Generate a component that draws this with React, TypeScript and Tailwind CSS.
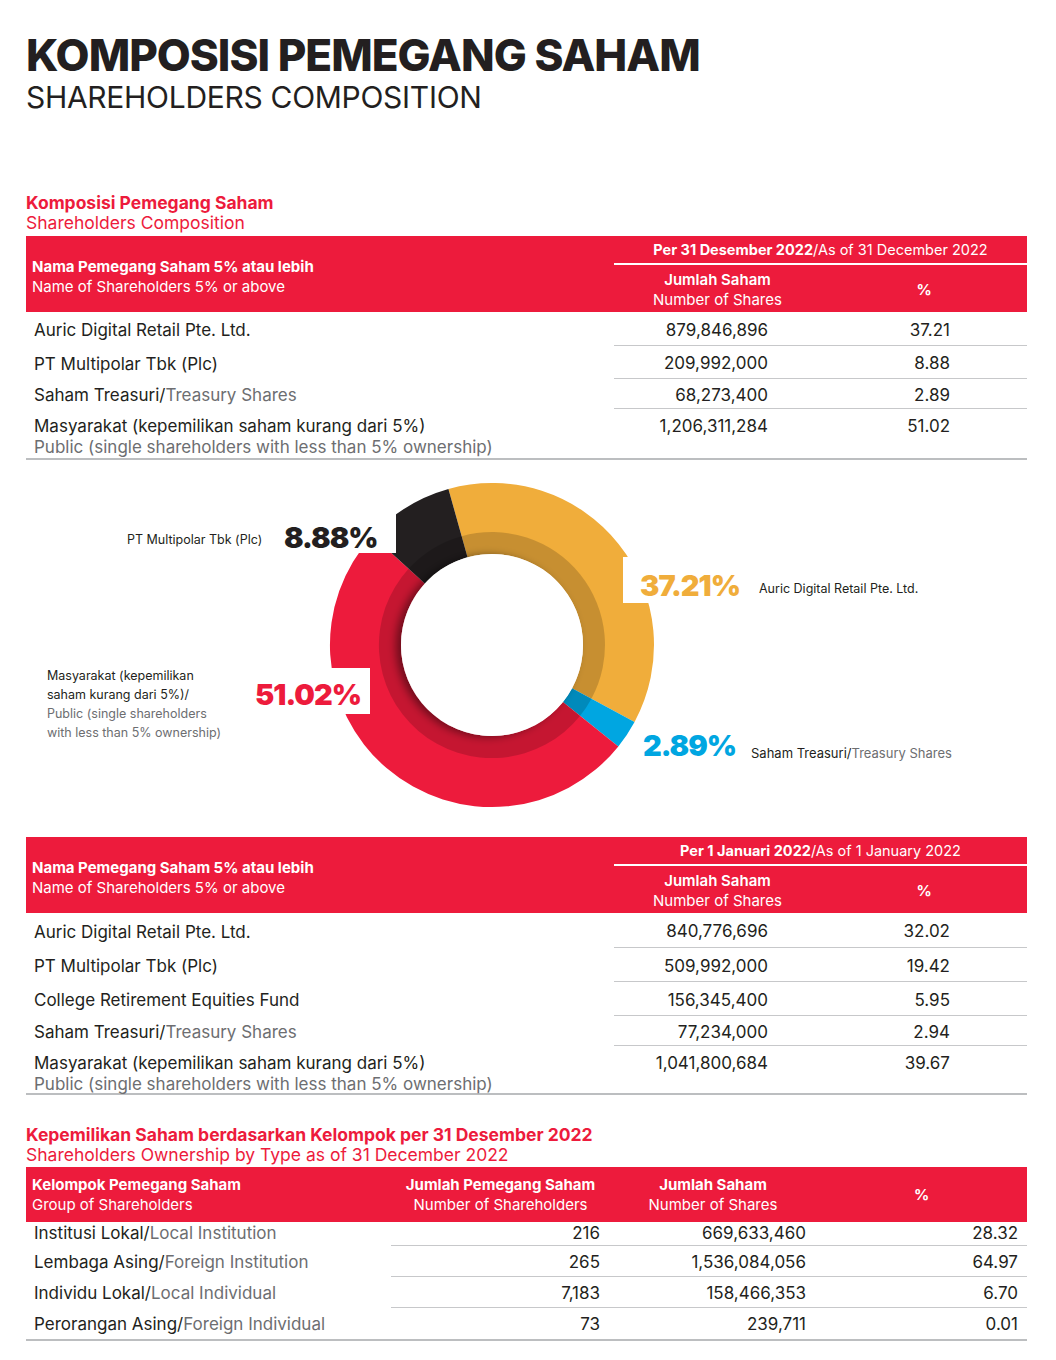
import React from 'react';

const RED = '#ED1B3C';

type Row = { id: string; en?: string; sub?: string; shares: string; pct: string };

const rows2022: Row[] = [
  { id: 'Auric Digital Retail Pte. Ltd.', shares: '879,846,896', pct: '37.21' },
  { id: 'PT Multipolar Tbk (Plc)', shares: '209,992,000', pct: '8.88' },
  { id: 'Saham Treasuri/', en: 'Treasury Shares', shares: '68,273,400', pct: '2.89' },
  {
    id: 'Masyarakat (kepemilikan saham kurang dari 5%)',
    sub: 'Public (single shareholders with less than 5% ownership)',
    shares: '1,206,311,284',
    pct: '51.02',
  },
];

const rows2021: Row[] = [
  { id: 'Auric Digital Retail Pte. Ltd.', shares: '840,776,696', pct: '32.02' },
  { id: 'PT Multipolar Tbk (Plc)', shares: '509,992,000', pct: '19.42' },
  { id: 'College Retirement Equities Fund', shares: '156,345,400', pct: '5.95' },
  { id: 'Saham Treasuri/', en: 'Treasury Shares', shares: '77,234,000', pct: '2.94' },
  {
    id: 'Masyarakat (kepemilikan saham kurang dari 5%)',
    sub: 'Public (single shareholders with less than 5% ownership)',
    shares: '1,041,800,684',
    pct: '39.67',
  },
];

const groups = [
  { id: 'Institusi Lokal/', en: 'Local Institution', holders: '216', shares: '669,633,460', pct: '28.32' },
  { id: 'Lembaga Asing/', en: 'Foreign Institution', holders: '265', shares: '1,536,084,056', pct: '64.97' },
  { id: 'Individu Lokal/', en: 'Local Individual', holders: '7,183', shares: '158,466,353', pct: '6.70' },
  { id: 'Perorangan Asing/', en: 'Foreign Individual', holders: '73', shares: '239,711', pct: '0.01' },
];

const ShareTable: React.FC<{ period: string; periodEn: string; rows: Row[]; heights: number[] }> = ({
  period,
  periodEn,
  rows,
  heights,
}) => (
  <div className="w-[1001px]">
    {/* Header */}
    <div className="flex h-[76px] bg-[#ED1B3C] text-white">
      <div className="w-[588px] flex flex-col justify-center pl-[6px] pt-[6px] leading-[20px] text-[15px]">
        <span className="font-bold">Nama Pemegang Saham 5% atau lebih</span>
        <span>Name of Shareholders 5% or above</span>
      </div>
      <div className="flex-1 flex flex-col">
        <div className="h-[29px] flex items-end justify-center pb-[2px] border-b-2 border-white text-[14.5px]">
          <span className="font-bold">{period}</span>
          <span>/{periodEn}</span>
        </div>
        <div className="flex-1 flex items-center">
          <div className="w-[207px] flex flex-col items-center leading-[20px] text-[15px] pt-[3px]">
            <span className="font-semibold">Jumlah Saham</span>
            <span>Number of Shares</span>
          </div>
          <div className="flex-1 text-center text-[15px] font-bold pt-[3px]">%</div>
        </div>
      </div>
    </div>
    {/* Rows */}
    {rows.map((r, i) => {
      const last = i === rows.length - 1;
      return (
        <div
          key={r.id + i}
          className={`flex text-[17px] text-[#231F20] ${last ? 'border-b-2 border-[#BCBEC0]' : ''}`}
          style={{ height: heights[i] }}
        >
          <div className={`w-[588px] pl-[8px] flex flex-col ${last ? 'pt-[7px] leading-[21px]' : 'justify-center pt-[4px]'}`}>
            <span>
              {r.id}
              {r.en && <span className="text-[#6D6E71]">{r.en}</span>}
            </span>
            {r.sub && <span className="text-[#6D6E71]">{r.sub}</span>}
          </div>
          <div
            className={`flex-1 flex ${last ? 'items-start pt-[7px] leading-[21px]' : 'items-center pt-[4px] border-b-[1.5px] border-[#C7C8CA]'}`}
          >
            <div className="w-[207px] text-right pr-[53px]">{r.shares}</div>
            <div className="flex-1 text-right pr-[77px]">{r.pct}</div>
          </div>
        </div>
      );
    })}
  </div>
);

const CX = 492;
const CY = 185;

function pt(r: number, deg: number) {
  const a = (deg * Math.PI) / 180;
  return `${(CX + r * Math.sin(a)).toFixed(2)} ${(CY - r * Math.cos(a)).toFixed(2)}`;
}

function arc(r0: number, r1: number, a0: number, a1: number) {
  const large = a1 - a0 > 180 ? 1 : 0;
  return `M ${pt(r1, a0)} A ${r1} ${r1} 0 ${large} 1 ${pt(r1, a1)} L ${pt(r0, a1)} A ${r0} ${r0} 0 ${large} 0 ${pt(r0, a0)} Z`;
}

const segments = [
  { color: '#F0AD3B', pct: 37.21 },
  { color: '#00A6E1', pct: 2.89 },
  { color: '#ED1B3C', pct: 51.02 },
  { color: '#231F20', pct: 8.88 },
];

const Donut: React.FC = () => {
  let start = -15.6;
  const parts = segments.map((s) => {
    const a0 = start;
    const a1 = start + (s.pct / 100) * 360;
    start = a1;
    return { ...s, a0, a1 };
  });
  return (
    <svg className="absolute left-0 top-0" width={1056} height={377} viewBox="0 0 1056 377">
      <defs>
        <filter id="holeShadow" x="-30%" y="-30%" width="160%" height="160%">
          <feDropShadow dx="-5" dy="1" stdDeviation="4" floodColor="#000" floodOpacity="0.45" />
        </filter>
      </defs>
      {parts.map((p) => (
        <g key={p.color}>
          <path d={arc(91, 162, p.a0, p.a1)} fill={p.color} />
          <path d={arc(91, 113, p.a0, p.a1)} fill="#000" fillOpacity={0.17} />
        </g>
      ))}
      {/* white cut-outs behind the big labels */}
      <rect x={270} y={39} width={126} height={54} fill="#fff" />
      <rect x={250} y={208} width={120} height={46} fill="#fff" />
      <rect x={623} y={97} width={120} height={46} fill="#fff" />
      <circle cx={CX} cy={CY} r={91} fill="#fff" filter="url(#holeShadow)" />
    </svg>
  );
};

const bigLabel = 'absolute h-[32px] flex items-center text-[29px] font-black tracking-[-1px]';

const Chart: React.FC = () => (
  <div className="relative h-[377px] w-[1056px] -ml-[26px]">
    <Donut />
    <div className="absolute left-[127px] top-[71px] h-[18px] flex items-center text-[12.5px] text-[#231F20]">
      PT Multipolar Tbk (Plc)
    </div>
    <div className={`${bigLabel} left-[284px] top-[62px] text-[#231F20]`}>8.88%</div>
    <div className={`${bigLabel} left-[640px] top-[110px] text-[#F0AD3B]`}>37.21%</div>
    <div className="absolute left-[759px] top-[120px] h-[18px] flex items-center text-[12.5px] text-[#231F20]">
      Auric Digital Retail Pte. Ltd.
    </div>
    <div className={`${bigLabel} left-[255px] top-[219px] text-[#ED1B3C]`}>51.02%</div>
    <div className="absolute left-[47px] top-[206px] text-[12.5px] leading-[19px] text-[#231F20]">
      <div>Masyarakat (kepemilikan</div>
      <div>saham kurang dari 5%)/</div>
      <div className="text-[#6D6E71]">Public (single shareholders</div>
      <div className="text-[#6D6E71]">with less than 5% ownership)</div>
    </div>
    <div className={`${bigLabel} left-[643px] top-[270px] text-[#00A6E1]`}>2.89%</div>
    <div className="absolute left-[751px] top-[285px] h-[18px] flex items-center text-[13px] text-[#231F20]">
      Saham Treasuri/<span className="text-[#6D6E71]">Treasury Shares</span>
    </div>
  </div>
);

const GroupTable: React.FC = () => {
  const heights = [24, 31, 31, 33];
  return (
    <div className="w-[1001px]">
      <div className="flex h-[55px] bg-[#ED1B3C] text-white text-[15px] leading-[20px]">
        <div className="w-[365px] pl-[6px] flex flex-col justify-center">
          <span className="font-bold">Kelompok Pemegang Saham</span>
          <span>Group of Shareholders</span>
        </div>
        <div className="w-[219px] flex flex-col items-center justify-center">
          <span className="font-bold">Jumlah Pemegang Saham</span>
          <span>Number of Shareholders</span>
        </div>
        <div className="w-[206px] flex flex-col items-center justify-center">
          <span className="font-bold">Jumlah Saham</span>
          <span>Number of Shares</span>
        </div>
        <div className="flex-1 flex items-center justify-center font-bold">%</div>
      </div>
      {groups.map((g, i) => {
        const last = i === groups.length - 1;
        const pad = i === 0 ? '' : 'pt-[3px]';
        return (
          <div
            key={g.id}
            className={`flex text-[17px] text-[#231F20] ${last ? 'border-b-2 border-[#BCBEC0]' : ''}`}
            style={{ height: heights[i] }}
          >
            <div className={`w-[365px] pl-[8px] flex items-center ${pad}`}>
              {g.id}
              <span className="text-[#6D6E71]">{g.en}</span>
            </div>
            <div className={`flex-1 flex items-center ${pad} ${last ? '' : 'border-b-[1.5px] border-[#C7C8CA]'}`}>
              <div className="w-[219px] text-right pr-[10px]">{g.holders}</div>
              <div className="w-[206px] text-right pr-[10px]">{g.shares}</div>
              <div className="flex-1 text-right pr-[9px]">{g.pct}</div>
            </div>
          </div>
        );
      })}
    </div>
  );
};

export default function App() {
  return (
    <div className="w-[1056px] h-[1360px] bg-white pl-[26px] font-['Inter','Liberation_Sans',sans-serif] text-[#231F20]">
      <h1 className="pt-[32px] text-[44px] leading-[46px] font-extrabold tracking-[-1px] text-[#231F20]">
        KOMPOSISI PEMEGANG SAHAM
      </h1>
      <h2 className="mt-[3px] text-[30px] leading-[33px] font-normal tracking-[-0.3px]">SHAREHOLDERS COMPOSITION</h2>

      <div className="mt-[79px] leading-[20px] text-[17.5px]" style={{ color: RED }}>
        <div className="font-bold">Komposisi Pemegang Saham</div>
        <div>Shareholders Composition</div>
      </div>
      <div className="mt-[3px]">
        <ShareTable
          period="Per 31 Desember 2022"
          periodEn="As of 31 December 2022"
          rows={rows2022}
          heights={[34, 33, 30, 51]}
        />
      </div>

      <Chart />

      <ShareTable
        period="Per 1 Januari 2022"
        periodEn="As of 1 January 2022"
        rows={rows2021}
        heights={[35, 34, 34, 30, 49]}
      />

      <div className="mt-[30px] leading-[20px] text-[17.5px]" style={{ color: RED }}>
        <div className="font-bold">Kepemilikan Saham berdasarkan Kelompok per 31 Desember 2022</div>
        <div>Shareholders Ownership by Type as of 31 December 2022</div>
      </div>
      <div className="mt-[2px]">
        <GroupTable />
      </div>
    </div>
  );
}
